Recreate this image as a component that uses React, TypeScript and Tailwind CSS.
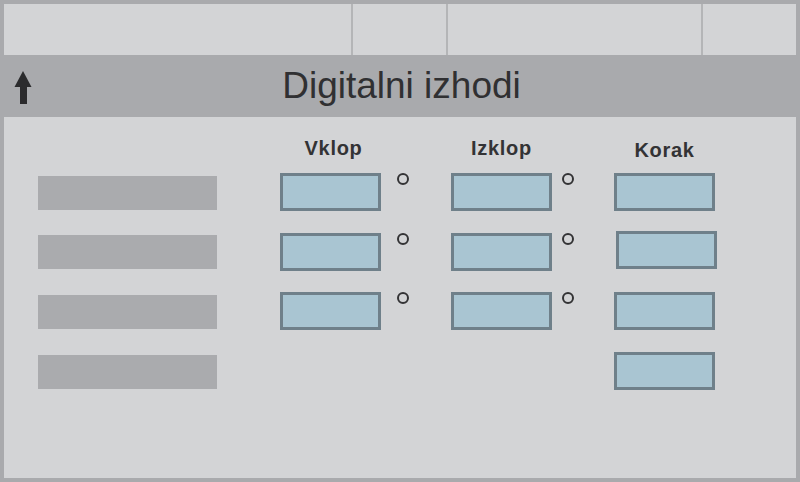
import React from "react";

const Box = ({ className = "" }: { className?: string }) => (
  <div className={`w-[101px] h-[38px] bg-[#a9c5d2] border-[3px] border-[#6f808a] ${className}`} />
);

const Dot = ({ className = "" }: { className?: string }) => (
  <div className={`w-[12px] h-[12px] rounded-full border-2 border-[#333335] ${className}`} />
);

const Label = ({ children, className = "" }: { children: React.ReactNode; className?: string }) => (
  <div className={`w-[101px] h-[22px] text-center text-[20px] leading-[22px] font-bold tracking-[0.7px] text-[#333335] ${className}`}>
    {children}
  </div>
);

export default function App() {
  const font = { fontFamily: '"Liberation Sans", Arial, sans-serif' };
  const rowMt = ["mt-0", "mt-[22px]", "mt-[21px]"];
  return (
    <div className="w-[800px] h-[482px] bg-[#a9aaad] p-[4px] flex flex-col" style={font}>
      {/* top bar */}
      <div className="h-[51px] flex gap-[2px] bg-[#b4b5b7]">
        <div className="w-[347px] bg-[#d3d4d6]" />
        <div className="w-[93px] bg-[#d3d4d6]" />
        <div className="w-[253px] bg-[#d3d4d6]" />
        <div className="flex-1 bg-[#d3d4d6]" />
      </div>
      {/* title bar */}
      <div className="h-[62px] relative flex items-center justify-center pb-[2px]">
        <svg className="absolute left-[10px] top-[16px]" width="18" height="34" viewBox="0 0 18 34">
          <path d="M9 0 L17.5 16 L13 16 L13 33 L6 33 L6 16 L0.5 16 Z" fill="#2b2b2d" />
        </svg>
        <span className="text-[37px] leading-[37px] text-[#303032] ml-[3px]">Digitalni izhodi</span>
      </div>
      {/* body */}
      <div className="flex-1 bg-[#d3d4d6] flex">
        <div className="pl-[34px] pt-[59px] flex flex-col">
          <div className="w-[179px] h-[34px] bg-[#aaabae]" />
          <div className="w-[179px] h-[34px] bg-[#aaabae] mt-[25px]" />
          <div className="w-[179px] h-[34px] bg-[#aaabae] mt-[26px]" />
          <div className="w-[179px] h-[34px] bg-[#aaabae] mt-[26px]" />
        </div>
        {/* Vklop */}
        <div className="ml-[63px] pt-[20px] flex flex-col">
          <Label className="pl-[6px]">Vklop</Label>
          <div className="mt-[14px] flex flex-col">
            {[0, 1, 2].map((i) => (
              <div key={i} className={`flex items-start ${rowMt[i]}`}>
                <Box />
                <Dot className="ml-[16px]" />
              </div>
            ))}
          </div>
        </div>
        {/* Izklop */}
        <div className="ml-[42px] pt-[20px] flex flex-col">
          <Label>Izklop</Label>
          <div className="mt-[14px] flex flex-col">
            {[0, 1, 2].map((i) => (
              <div key={i} className={`flex items-start ${rowMt[i]}`}>
                <Box />
                <Dot className="ml-[10px]" />
              </div>
            ))}
          </div>
        </div>
        {/* Korak */}
        <div className="ml-[40px] pt-[22px] flex flex-col">
          <Label>Korak</Label>
          <div className="mt-[12px] flex flex-col">
            <Box />
            <Box className="mt-[20px] ml-[2px]" />
            <Box className="mt-[23px]" />
            <Box className="mt-[22px]" />
          </div>
        </div>
      </div>
    </div>
  );
}
